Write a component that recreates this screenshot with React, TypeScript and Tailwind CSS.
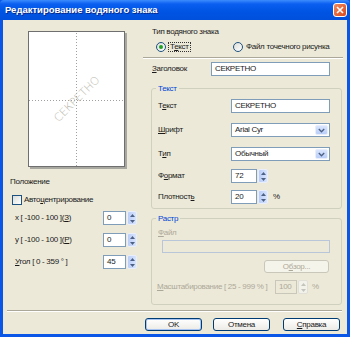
import React from "react";

function U({ children }: { children: React.ReactNode }) {
  return <span className="underline underline-offset-[1px]">{children}</span>;
}

function Radio({ checked }: { checked?: boolean }) {
  return (
    <div className="w-[10px] h-[10px] rounded-full border border-[#1c5180] bg-[linear-gradient(135deg,#dcdcd7,#ffffff)] flex items-center justify-center shrink-0">
      {checked && <div className="w-[4px] h-[4px] rounded-full bg-[#21a121]" />}
    </div>
  );
}

function Spin({ disabled }: { disabled?: boolean }) {
  const fill = disabled ? "#c4c4bc" : "#4d6185";
  return (
    <div
      className={`flex flex-col w-[10px] h-full ml-[1px] rounded-[2px] border ${
        disabled ? "border-[#e0e0d8] bg-[#f2f1ea]" : "border-[#e8eefc] bg-[linear-gradient(90deg,#b9cdf8,#d9e5fd)]"
      }`}
    >
      <div className="flex-1 flex items-center justify-center">
        <svg width="5" height="3" viewBox="0 0 5 3">
          <path d="M0 3 L2.5 0 L5 3Z" fill={fill} />
        </svg>
      </div>
      <div className="flex-1 flex items-center justify-center">
        <svg width="5" height="3" viewBox="0 0 5 3">
          <path d="M0 0 L2.5 3 L5 0Z" fill={fill} />
        </svg>
      </div>
    </div>
  );
}

function SpinBox({ value, w = 23, disabled }: { value: string; w?: number; disabled?: boolean }) {
  return (
    <div className="flex h-[14px]">
      <div
        style={{ width: w }}
        className={`h-full border flex items-center pl-[3px] ${
          disabled ? "border-[#c9c7ba] bg-[#ece9d8] text-[#aca899]" : "border-[#7f9db9] bg-white"
        }`}
      >
        {value}
      </div>
      <Spin disabled={disabled} />
    </div>
  );
}

function Select({ value }: { value: string }) {
  return (
    <div className="w-[99px] h-[14px] border border-[#7f9db9] bg-white flex items-center pl-[3px] pr-[1px]">
      <span className="flex-1">{value}</span>
      <div className="w-[13px] h-[10px] rounded-[2px] bg-[linear-gradient(180deg,#d9e5fd,#b9cdf8)] border border-[#e8eefc] flex items-center justify-center">
        <svg width="7" height="5" viewBox="0 0 7 5">
          <path d="M0.8 1 L3.5 3.7 L6.2 1" stroke="#4d6185" strokeWidth="1.4" fill="none" />
        </svg>
      </div>
    </div>
  );
}

function Button({ children, def, disabled, w = 57 }: { children: React.ReactNode; def?: boolean; disabled?: boolean; w?: number }) {
  return (
    <div
      style={{ width: w }}
      className={`h-[13px] rounded-[3px] border flex items-center justify-center ${
        disabled
          ? "border-[#c9c7ba] bg-[#f5f4ea] text-[#aca899]"
          : def
          ? "border-[#003c74] bg-[linear-gradient(180deg,#ffffff,#ecebe6)] shadow-[inset_0_0_0_1px_#a6c3f2]"
          : "border-[#003c74] bg-[linear-gradient(180deg,#ffffff,#ecebe6)]"
      }`}
    >
      {children}
    </div>
  );
}

export default function App() {
  return (
    <div className="w-[350px] h-[337px] flex flex-col bg-[#0a56e6] font-['Liberation_Sans',Arial,sans-serif] text-[8px] tracking-[-0.3px] text-[#1a1a1a] leading-none">
      {/* Title bar */}
      <div className="h-[20px] shrink-0 flex items-center pl-[5px] pr-[3px] bg-[linear-gradient(180deg,#3c8cfd_0%,#0a5ef0_20%,#0054e3_60%,#0050dc_100%)] rounded-t-[4px]">
        <span className="flex-1 text-white font-bold text-[9.5px] tracking-[0px] [text-shadow:1px_1px_0_#0a2a8a]">
          Редактирование водяного знака
        </span>
        <div className="w-[14px] h-[14px] rounded-[3px] border border-white bg-[linear-gradient(135deg,#f08a5c,#d84a1e)] flex items-center justify-center">
          <svg width="8" height="8" viewBox="0 0 8 8">
            <path d="M1 1 L7 7 M7 1 L1 7" stroke="white" strokeWidth="1.6" />
          </svg>
        </div>
      </div>

      {/* Client area */}
      <div className="flex-1 mx-[3px] mb-[3px] bg-[#ece9d8] flex flex-col">
        <div className="flex h-[290px]">
          {/* Left column */}
          <div className="w-[140px] flex flex-col">
            <div className="mt-[11px] ml-[25px] w-[97px] h-[136px] relative bg-white border border-[#6f6f6f] shadow-[2px_2px_0_#a8a8a0]">
              <svg className="absolute inset-0" width="95" height="134" viewBox="0 0 95 134">
                <line x1="47.5" y1="1" x2="47.5" y2="134" stroke="#a0a0a0" strokeWidth="1" strokeDasharray="1 2" />
                <line x1="0" y1="68.5" x2="95" y2="68.5" stroke="#a0a0a0" strokeWidth="1" strokeDasharray="1 2" />
              </svg>
              <div className="absolute left-1/2 top-1/2 -translate-x-1/2 -translate-y-1/2 -rotate-45 text-[11px] tracking-[0px] text-[#b8b8aa] font-['DejaVu_Sans',sans-serif] font-extralight whitespace-nowrap">
                СЕКРЕТНО
              </div>
            </div>
            <div className="mt-[9px] ml-[7px] h-[12px] flex items-center">Положение</div>
            <div className="mt-[6px] ml-[9px] h-[12px] flex items-center gap-[2px]">
              <div className="w-[10px] h-[10px] border border-[#1c5180] bg-[linear-gradient(135deg,#dcdcd7,#ffffff)]" />
              <span>
                Авто<U>ц</U>ентрирование
              </span>
            </div>
            <div className="mt-[5px] flex items-center h-[14px]">
              <div className="w-[100px] pl-[12px]">
                x [ -100 - 100 ](<U>З</U>)
              </div>
              <SpinBox value="0" />
            </div>
            <div className="mt-[8px] flex items-center h-[14px]">
              <div className="w-[100px] pl-[12px]">
                y [ -100 - 100 ](<U>Р</U>)
              </div>
              <SpinBox value="0" />
            </div>
            <div className="mt-[8px] flex items-center h-[14px]">
              <div className="w-[100px] pl-[12px]">
                <U>У</U>гол [ 0 - 359 ° ]
              </div>
              <SpinBox value="45" />
            </div>
          </div>

          {/* Right column */}
          <div className="w-[204px] flex flex-col">
            <div className="mt-[6px] h-[12px] pl-[9px] flex items-center">Тип водяного знака</div>
            <div className="mt-[3px] h-[12px] flex items-center">
              <div className="ml-[13px] flex items-center gap-[3px] w-[77px]">
                <Radio checked />
                <span className="outline outline-1 outline-dotted outline-[#333] px-[1px]">
                  Т<U>е</U>кст
                </span>
              </div>
              <div className="flex items-center gap-[3px]">
                <Radio />
                <span>Файл точечного рисунка</span>
              </div>
            </div>
            <div className="mt-[4px] w-[200px] h-[2px] border-t border-[#aca899] border-b border-b-white" />
            <div className="mt-[3px] h-[14px] flex items-center">
              <div className="w-[68px] pl-[9px]">
                <U>З</U>аголовок
              </div>
              <div className="w-[119px] h-[14px] border border-[#7f9db9] bg-white flex items-center pl-[3px]">СЕКРЕТНО</div>
            </div>

            {/* Group Текст */}
            <div className="relative mt-[12px] ml-[8px] w-[191px] h-[121px] border border-[#d0d0bf] rounded-[3px] flex flex-col">
              <div className="absolute -top-[5px] left-[4px] px-[2px] bg-[#ece9d8] text-[#0046d5] h-[10px] flex items-center">Текст</div>
              <div className="mt-[10px] h-[14px] flex items-center">
                <div className="w-[79px] pl-[6px]">
                  Т<U>е</U>кст
                </div>
                <div className="w-[99px] h-[14px] border border-[#7f9db9] bg-white flex items-center pl-[3px]">СЕКРЕТНО</div>
              </div>
              <div className="mt-[10px] h-[14px] flex items-center">
                <div className="w-[79px] pl-[6px]">
                  <U>Ш</U>рифт
                </div>
                <Select value="Arial Cyr" />
              </div>
              <div className="mt-[10px] h-[14px] flex items-center">
                <div className="w-[79px] pl-[6px]">
                  Т<U>и</U>п
                </div>
                <Select value="Обычный" />
              </div>
              <div className="mt-[8px] h-[14px] flex items-center">
                <div className="w-[79px] pl-[6px]">
                  Ф<U>о</U>рмат
                </div>
                <SpinBox value="72" w={26} />
              </div>
              <div className="mt-[7px] h-[14px] flex items-center">
                <div className="w-[79px] pl-[6px]">
                  Плотност<U>ь</U>
                </div>
                <SpinBox value="20" w={26} />
                <span className="ml-[5px]">%</span>
              </div>
            </div>

            {/* Group Растр */}
            <div className="relative mt-[9px] ml-[8px] w-[191px] h-[87px] border border-[#d0d0bf] rounded-[3px] flex flex-col text-[#aca899]">
              <div className="absolute -top-[5px] left-[4px] px-[2px] bg-[#ece9d8] text-[#0046d5] h-[10px] flex items-center">Растр</div>
              <div className="mt-[8px] h-[12px] pl-[6px] flex items-center">
                <span>
                  <U>Ф</U>айл
                </span>
              </div>
              <div className="mt-[1px] ml-[10px] w-[168px] h-[13px] border border-[#b9c6d9] bg-[#ece9d8]" />
              <div className="mt-[7px] ml-[112px]">
                <Button disabled w={65}>
                  О<U>б</U>зор...
                </Button>
              </div>
              <div className="mt-[7px] h-[14px] flex items-center">
                <div className="w-[123px] pl-[5px]">
                  <U>М</U>асштабирование [ 25 - 999 % ]
                </div>
                <SpinBox value="100" w={22} disabled />
                <span className="ml-[4px]">%</span>
              </div>
            </div>
          </div>
        </div>

        {/* separator */}
        <div className="ml-[4px] w-[335px] h-[2px] border-t border-[#aca899] border-b border-b-white" />

        {/* buttons */}
        <div className="mt-[6px] flex">
          <div className="ml-[142px]">
            <Button def>OK</Button>
          </div>
          <div className="ml-[11px]">
            <Button>Отмена</Button>
          </div>
          <div className="ml-[13px]">
            <Button>
              <U>С</U>правка
            </Button>
          </div>
        </div>
      </div>
    </div>
  );
}
